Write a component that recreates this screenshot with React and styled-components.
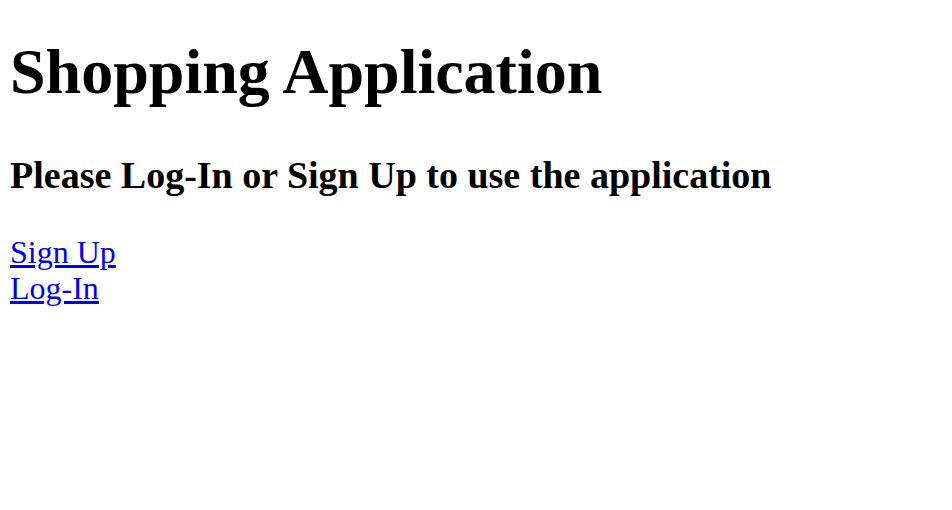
import React from 'react';
import styled, { createGlobalStyle } from 'styled-components';

const GlobalStyle = createGlobalStyle`
  body {
    margin: 0;
    background: #fff;
    font-family: "Liberation Serif", "Times New Roman", serif;
  }
`;

const Page = styled.div`
  padding: 35px 10px 0;
`;

const Title = styled.h1`
  margin: 0;
  font-size: 64px;
  font-weight: bold;
  color: #000;
`;

const Subtitle = styled.h2`
  margin: 44px 0 37px;
  font-size: 38px;
  font-weight: bold;
  color: #000;
`;

const Links = styled.div`
  display: flex;
  flex-direction: column;
  align-items: flex-start;
  font-size: 32px;
  line-height: 36px;
`;

const NavLink = styled.a`
  color: #0000ee;
  text-decoration: underline;
`;

function App() {
  return (
    <>
      <GlobalStyle />
      <Page>
        <Title>Shopping Application</Title>
        <Subtitle>Please Log-In or Sign Up to use the application</Subtitle>
        <Links>
          <NavLink href='#signup'>Sign Up</NavLink>
          <NavLink href='#login'>Log-In</NavLink>
        </Links>
      </Page>
    </>
  );
}

export default App;
